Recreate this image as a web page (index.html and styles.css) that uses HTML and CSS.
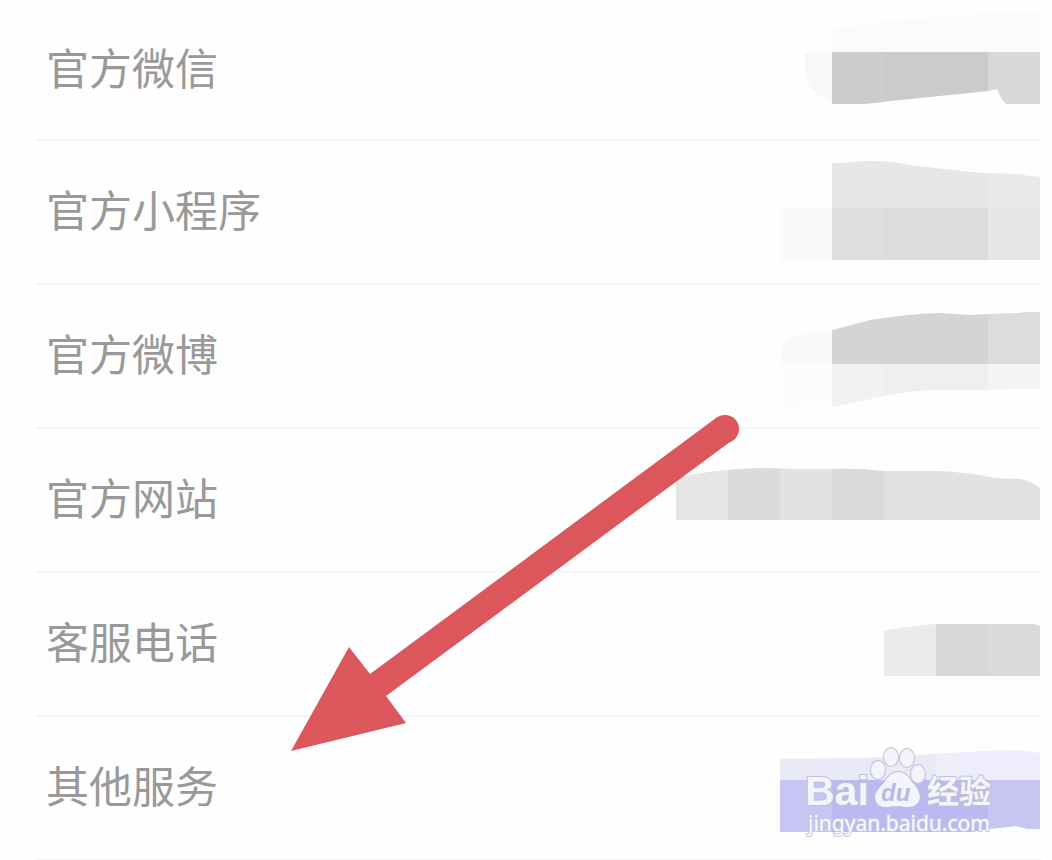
FILE: index.html
```html
<!DOCTYPE html>
<html lang="zh-CN">
<head>
    <meta charset="UTF-8">
    <meta name="viewport" content="width=device-width, initial-scale=1.0">
    <title>官方服务</title>
    <link rel="stylesheet" href="styles.css">
</head>
<body>
    <main class="page">
        <ul class="service-list">
            <li class="service">
                <span class="label">官方微信</span>
                <svg class="mosaic" width="308" height="139" viewBox="732 0 308 139" aria-hidden="true">
                    <path fill="#fbfbfb" d="M832 29L880 22L992 13H1040V52H832z"/>
                    <path fill="#f8f8f8" d="M805 52H832V103C815 96 805 84 805 66z"/>
                    <path fill="#cbcbcb" d="M832 52H988V91L862 104H832z"/>
                    <path fill="#cdcdcd" d="M832 52H884V102L862 104H832z"/>
                    <path fill="#d8d8d8" d="M988 52H1040V104H1006Q1000 98 997 89L988 91z"/>
                </svg>
            </li>
            <li class="service">
                <span class="label">官方小程序</span>
                <svg class="mosaic" width="308" height="142" viewBox="732 141 308 142" aria-hidden="true">
                    <path fill="#fdfdfd" d="M784 178L802 168L832 163V208H781z"/>
                    <path fill="#fafafa" d="M781 208H832V260H781z"/>
                    <path fill="#e7e7e7" d="M832 163H840Q878 158 910 165L970 172L988 173V208H832z"/>
                    <path fill="#e9e9e9" d="M988 173L1016 174L1040 177V208H988z"/>
                    <path fill="#dcdcdc" d="M832 208H988V260H832z"/>
                    <path fill="#dedede" d="M832 208H884V260H832z"/>
                    <path fill="#e7e7e7" d="M988 208H1040V260H988z"/>
                </svg>
            </li>
            <li class="service">
                <span class="label">官方微博</span>
                <svg class="mosaic" width="308" height="142" viewBox="732 285 308 142" aria-hidden="true">
                    <path fill="#f9f9f9" d="M781 364V350Q787 336 804 334L832 330V364z"/>
                    <path fill="#fcfcfc" d="M781 364H832V404L784 407z"/>
                    <path fill="#d4d4d4" d="M832 330L870 320Q906 314 940 313L969 315L988 314V364H832z"/>
                    <path fill="#dcdcdc" d="M988 314L1018 313L1025 312H1040V364H988z"/>
                    <path fill="#efefef" d="M832 364H988V390H930Q890 393 870 399L832 407z"/>
                    <path fill="#f2f2f2" d="M832 364H884V396L832 407z"/>
                    <path fill="#f5f5f5" d="M988 364H1040V389L988 390z"/>
                </svg>
            </li>
            <li class="service">
                <span class="label">官方网站</span>
                <svg class="mosaic" width="364" height="142" viewBox="676 429 364 142" aria-hidden="true">
                    <path fill="#e2e2e2" d="M676 478Q705 472 728 470Q760 467 800 469L830 469Q850 468 880 471L940 471Q975 473 995 478L1020 479Q1032 481 1040 488V520H676z"/>
                    <path fill="#e6e6e6" d="M676 478Q705 472 728 470V520H676z"/>
                    <path fill="#dbdbdb" d="M728 470Q754 467 780 469V520H728z"/>
                    <path fill="#dadada" d="M832 469Q858 468 884 471V520H832z"/>
                    <path fill="#e0e0e0" d="M884 471H936V520H884z"/>
                </svg>
            </li>
            <li class="service">
                <span class="label">客服电话</span>
                <svg class="mosaic" width="308" height="142" viewBox="732 573 308 142" aria-hidden="true">
                    <path fill="#fdfdfd" d="M882 676H1040V700H882z"/>
                    <path fill="#ebebeb" d="M884 631Q900 627 936 624V676H884z"/>
                    <path fill="#d8d8d8" d="M936 624H1034L1040 626V676H936z"/>
                    <path fill="#dadada" d="M988 624H1034L1040 626V676H988z"/>
                </svg>
            </li>
            <li class="service">
                <span class="label">其他服务</span>
                <svg class="mosaic" width="308" height="142" viewBox="732 717 308 142" aria-hidden="true">
                    <path fill="#fdfcfe" d="M734 780H780V832L738 820z"/>
                    <path fill="#eae9f8" d="M780 759L860 758L988 751V780H780z"/>
                    <path fill="#eeedfb" d="M936 754L988 751L1020 750L1040 753V780H936z"/>
                    <path fill="#c6c5f3" d="M780 780H1040V829H1028L1016 826L988 829L970 832H780z"/>
                    <path fill="#bab9f1" d="M832 780H988V829L970 832H832z"/>
                    <path fill="#c8c6f1" d="M988 780H1040V829H1028L1016 826L988 829z"/>
                </svg>
            </li>
        </ul>

        <!-- arrow pointing at the last entry -->
        <svg class="arrow" width="448" height="337" viewBox="291 415 448 337" aria-hidden="true">
            <path d="M291 751L349 647L370 674L716 418A14 14 0 0 1 734 439L386 696L406 723z"/>
            <circle cx="725" cy="429" r="14"/>
        </svg>

        <svg class="watermark" width="200" height="100" viewBox="800 742 200 100" role="img" aria-label="Baidu 经验">
            <g class="logo">
                <text class="logo-latin" x="805" y="805">Bai</text>
                <ellipse cx="878" cy="770" rx="7" ry="9"/>
                <ellipse cx="891" cy="757" rx="7" ry="9"/>
                <ellipse cx="907" cy="758" rx="7" ry="9"/>
                <ellipse cx="918" cy="774" rx="7" ry="9"/>
                <path d="M898 772Q906 772 911 781Q920 790 920 798Q918 808 905 807Q898 805 888 807Q876 808 875 798Q875 791 884 783Q890 772 898 772z"/>
                <text class="logo-cn" x="927" y="803">经验</text>
            </g>
            <text class="logo-du" x="881" y="801">du</text>
            <text class="logo-url" x="808" y="831">jingyan.baidu.com</text>
        </svg>
    </main>
</body>
</html>
```
FILE: styles.css
```css
* {
    margin: 0;
    padding: 0;
    box-sizing: border-box;
}

body {
    background-color: #fefefe;
    color: #999;
    font-family: "Noto Sans CJK SC", "Noto Sans", sans-serif;
}

.page {
    position: relative;
    overflow: hidden;
}

.service-list {
    list-style: none;
    padding: 0 10px 0 36px;
}

.service {
    display: flex;
    align-items: center;
    justify-content: space-between;
    padding: 0 2px 0 10px;
    border-bottom: 2px solid #f5f5f5;
}

.label {
    padding-bottom: 8px;
    font-size: 43px;
    line-height: 64px;
}

.mosaic {
    display: block;
    flex-shrink: 0;
}

.arrow {
    position: absolute;
    left: 291px;
    top: 415px;
    fill: #db575c;
}

.watermark {
    position: absolute;
    right: 52px;
    bottom: 19px;
}

.logo {
    fill: #f4f4fd;
    stroke: #c0bfd4;
    stroke-width: 2px;
    paint-order: stroke;
}

.logo-latin {
    font: bold 41px "Liberation Sans", Arial, sans-serif;
}

.logo-cn {
    font: bold 32px "Noto Sans CJK SC", sans-serif;
}

.logo-du {
    font: italic bold 24px "Liberation Sans", Arial, sans-serif;
    fill: #b9b8e6;
}

.logo-url {
    font: 21px "Noto Sans", sans-serif;
    fill: #fafaff;
    stroke: #c9c8e4;
    stroke-width: 2px;
    paint-order: stroke;
}
```
